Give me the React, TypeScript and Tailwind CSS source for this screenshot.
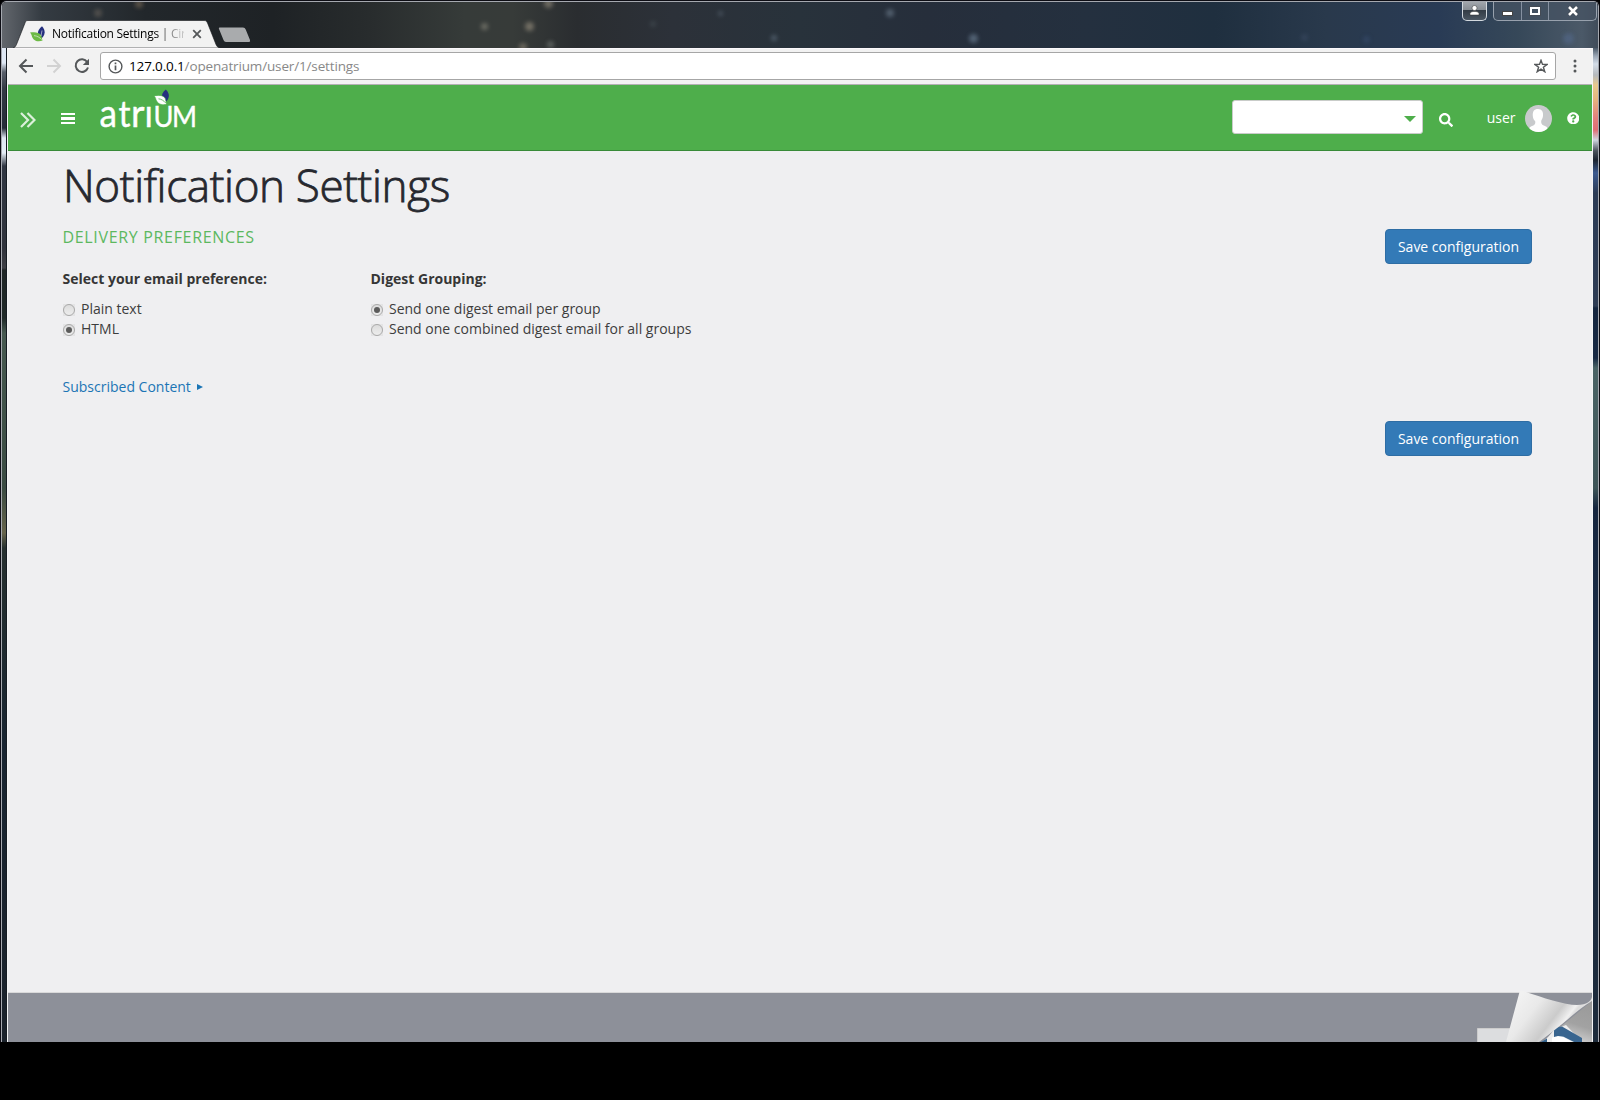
import React from "react";
import { FaSearch, FaQuestionCircle } from "react-icons/fa";

function Leaf({ className, light }: { className: string; light: string }) {
  return (
    <svg viewBox="0 0 16 16" className={className}>
      <path d="M12 0.3 C8.6 3 7.4 6 8 9 C8.5 10.8 9.6 12 11 12.8 C14.5 10 16.6 5.5 12 .3Z" fill="#25307f" />
      <path d="M0 6.6 C4 5.8 9 6 11 9 C12 11 11.8 12.8 12.6 14.6 C9 16 4.5 15.5 2.6 12 C1.6 10 1.6 8 0 6.6Z" fill={light} />
      <path d="M4 9.600 C7.500 10 10 11.600 11.600 13.600 M12 4.500 L11 10" stroke="#f2f2f2" strokeWidth=".6" fill="none" />
    </svg>
  );
}

const stars = [
  { x: 484, y: 25, s: 7, c: "#aaa695" },
  { x: 548, y: 2, s: 9, c: "#b9ae98" },
  { x: 523, y: 46, s: 8, c: "#a89e88" },
  { x: 550, y: 43, s: 7, c: "#8f958f" },
  { x: 529, y: 25, s: 9, c: "#c0b39c" },
  { x: 720, y: 12, s: 5, c: "#6d7c8a" },
  { x: 774, y: 37, s: 6, c: "#7b8ea0" },
  { x: 890, y: 12, s: 8, c: "#8496a8" },
  { x: 973, y: 37, s: 9, c: "#8ba3bb" },
  { x: 653, y: 23, s: 6, c: "#505b60" },
  { x: 98, y: 12, s: 8, c: "#81766a" },
  { x: 139, y: 3, s: 8, c: "#9a8469" },
  { x: 1304, y: 36, s: 7, c: "#42526b" },
  { x: 1366, y: 38, s: 7, c: "#3d5377" },
  { x: 1568, y: 37, s: 11, c: "#59719a" },
];

function TitleBar() {
  return (
    <div className="relative flex h-[46px] shrink-0 items-start overflow-hidden bg-[linear-gradient(90deg,#62666c_0%,#343b42_2.5%,#22272b_9%,#1e2225_17%,#282c2d_23%,#363b39_29%,#373b39_32%,#2a2d30_36%,#2c3139_42%,#28323b_50%,#262e3b_58%,#24303f_68%,#1f2f3f_76%,#29394c_83%,#293b55_90%,#364859_95%,#4b5968_99%,#404c5a_100%)]">
      {stars.map((s, i) => (
        <span
          key={i}
          className="absolute rounded-full opacity-45 blur-[2px]"
          style={{ left: s.x - 2 - s.s / 2, top: s.y - s.s / 2 - 1, width: s.s, height: s.s, background: s.c }}
        />
      ))}
      <div className="relative mt-[18px] ml-[11px] h-7 w-[207px]">
        <svg className="absolute inset-0" width="207" height="28" viewBox="0 0 207 28">
          <path d="M0 28 C2 27.500 2.500 26.500 3.500 24.500 L12 3 C12.700 1 13 .5 15 .5 H191 C193 .5 193.500 1 194.500 3 L203 24.500 C204 26.500 204.500 27.500 207 28Z" fill="#f2f2f2" stroke="#15181b" strokeWidth=".6" />
        </svg>
        <div className="relative flex h-full items-center pl-[17px]">
          <Leaf className="size-4" light="#6dba45" />
          <div className="ml-[6px] h-5 w-[132px] bg-[linear-gradient(90deg,#000_78%,#0003_97%)] bg-clip-text font-['Open_Sans'] text-[12px] leading-5 font-normal tracking-[-0.27px] whitespace-nowrap text-transparent">
            Notification Settings | Cir
          </div>
          <svg className="ml-2" width="10" height="10" viewBox="0 0 10 10">
            <path d="M1.200 1.200 L8.800 8.800 M8.800 1.200 L1.200 8.800" stroke="#55585a" strokeWidth="1.800" />
          </svg>
        </div>
      </div>
      <svg className="relative mt-[25px] -ml-[2px]" width="34" height="16" viewBox="0 0 34 16">
        <path d="M1.500 0.500 H25 Q27 .5 27.700 2.500 L32 13 Q32.700 15 31 15 H8 Q6.300 15 5.500 13 L1 2 Q.4 .5 1.500 .5Z" fill="#a9abad" />
      </svg>
      <div className="relative -mt-px mr-px ml-auto flex">
        <div className="mr-[6px] flex h-5 w-[25px] items-center justify-center rounded-b-[5px] border border-t-0 border-[#d3d9df] bg-[linear-gradient(#a4a9af_0%,#888e95_45%,#333c46_50%,#4b5763_100%)]">
          <svg width="11" height="11" viewBox="0 0 11 11">
            <circle cx="5.500" cy="3" r="2.500" fill="#fff" stroke="#333" strokeWidth=".5" />
            <path d="M1 10 V8.500 Q1.500 6.500 4 6.500 H7 Q9.500 6.500 10 8.500 V10Z" fill="#fff" stroke="#333" strokeWidth=".5" />
          </svg>
        </div>
        <div className="flex h-5 w-[104px] divide-x divide-[#8590a0] rounded-b-[5px] border border-t-0 border-[#98a1ad] bg-[#465362]/70">
          <div className="flex w-[28px] items-center justify-center">
            <span className="mt-[6px] h-[5px] w-[11px] border border-[#444] bg-white" />
          </div>
          <div className="flex w-[27px] items-center justify-center">
            <span className="h-[8px] w-[10px] border-2 border-white outline outline-[#444b55]" />
          </div>
          <div className="flex flex-1 items-center justify-center">
            <svg width="12" height="10" viewBox="0 0 12 10">
              <path d="M2 1 L10 9 M10 1 L2 9" stroke="#3c444e" strokeWidth="4" />
              <path d="M2 1 L10 9 M10 1 L2 9" stroke="#fff" strokeWidth="2.600" />
            </svg>
          </div>
        </div>
      </div>
    </div>
  );
}

function Toolbar() {
  return (
    <div className="flex h-9 shrink-0 items-center border-t border-t-[#fbf8fb] bg-[#f2f2f2] pb-px pl-[9px]">
      <svg width="17" height="16" viewBox="0 0 17 16" fill="none" stroke="#55585a" strokeWidth="2">
        <path d="M16 8 H3.500 M9.500 1.500 L3 8 L9.500 14.500" />
      </svg>
      <svg className="ml-3" width="17" height="16" viewBox="0 0 17 16" fill="none" stroke="#d2d2d2" strokeWidth="2">
        <path d="M1 8 H13.500 M7.500 1.500 L14 8 L7.500 14.500" />
      </svg>
      <svg className="ml-[11px]" width="16" height="16" viewBox="0 0 16 16" fill="none">
        <path d="M13.200 4 A6.300 6.300 0 1 0 14 9.500" stroke="#55585a" strokeWidth="2" />
        <path d="M15 .8 V7 H8.800Z" fill="#55585a" />
      </svg>
      <div className="ml-[10px] flex h-7 w-[1456px] items-center rounded-[3px] border border-[#a6a6a6] bg-white pr-[7px] pl-[7px]">
        <svg width="15" height="15" viewBox="0 0 15 15" fill="none">
          <circle cx="7.500" cy="7.500" r="6.400" stroke="#55585a" strokeWidth="1.400" />
          <path d="M7.500 6.500 V11.200 M7.500 3.600 V5.200" stroke="#55585a" strokeWidth="1.700" />
        </svg>
        <span className="ml-[6px] font-['Open_Sans'] text-[13.500px] leading-5 tracking-[-0.15px] text-[#888]">
          <span className="text-black">127.0.0.1</span>/openatrium/user/1/settings
        </span>
        <svg className="ml-auto" width="14" height="14" viewBox="0 0 14 14" fill="none" stroke="#55585a" strokeWidth="1.400">
          <path d="M7 1.300 L8.500 5.400 L13 5.500 L9.400 8.200 L10.800 12.700 L7 10.100 L3.200 12.700 L4.600 8.200 L1 5.500 L5.500 5.400Z" />
        </svg>
      </div>
      <svg className="ml-[17px]" width="4" height="14" viewBox="0 0 4 14" fill="#55585a">
        <circle cx="2" cy="2" r="1.500" />
        <circle cx="2" cy="7" r="1.500" />
        <circle cx="2" cy="12" r="1.500" />
      </svg>
    </div>
  );
}

function Logo() {
  return (
    <svg width="100" height="64" viewBox="0 -8 100 64" fill="#fff" stroke="#fff" strokeWidth=".4" fontFamily="Lato, sans-serif" fontSize="39">
      <text y="38" x="-.5" textLength="17.500" lengthAdjust="spacingAndGlyphs">a</text>
      <text y="38" x="18.500" fontSize="37" textLength="12" lengthAdjust="spacingAndGlyphs">t</text>
      <text y="38" x="31" textLength="13.500" lengthAdjust="spacingAndGlyphs">r</text>
      <text y="38" x="44.500" textLength="8.500" lengthAdjust="spacingAndGlyphs">ı</text>
      <text y="38" x="53.500" fontSize="28" textLength="20" lengthAdjust="spacingAndGlyphs">U</text>
      <text y="38" x="72" fontSize="28" textLength="25" lengthAdjust="spacingAndGlyphs">M</text>
      <g transform="translate(54 0)" stroke="none">
        <path d="M11.800 0.500 C8.600 3 7.400 6 8 9 L12 12.800 C14.500 10 17 5.500 11.800 .5Z" fill="#25307f" />
        <path d="M0 7 C4 6 9 6 11 9 C12 11 11.800 13 12.600 15 C9 16.500 4.500 15.500 2.600 12 C1.600 10 1.600 8 0 7Z" stroke="#4eae4b" strokeWidth=".6" />
        <path d="M4.500 9.800 C7.500 10 10 12 11.800 14" stroke="#4eae4b" strokeWidth=".8" fill="none" />
      </g>
    </svg>
  );
}

function SiteHeader() {
  return (
    <header className="flex h-[66px] shrink-0 items-center border-b border-[#388a38] bg-[#4eae4b] pl-3">
      <svg className="mt-1" width="16" height="16" viewBox="0 0 16 16" fill="none" stroke="#dcf0db" strokeWidth="2.200">
        <path d="M1 1 L8 8 L1 15 M7.500 1 L14.500 8 L7.500 15" />
      </svg>
      <div className="mt-[2px] ml-[25px] flex w-[14px] flex-col gap-[2px]">
        <span className="h-[2.500px] bg-white" />
        <span className="h-[2.500px] bg-white" />
        <span className="h-[2.500px] bg-white" />
      </div>
      <div className="-mt-[10px] ml-[25px] flex">
        <Logo />
      </div>
      <div className="ml-auto flex items-center pr-[13px]">
        <div className="-mt-[2px] mr-px flex h-[34px] w-[191px] items-center justify-end rounded-[3px] border border-[#c9ccc9] bg-white pr-[6px]">
          <span className="mt-1 border-x-[6px] border-t-[6px] border-x-transparent border-t-[#4eae4b]" />
        </div>
        <FaSearch className="mt-[4px] ml-[15px] size-[14px] text-white" />
        <span className="ml-[33.500px] font-['Open_Sans'] text-[14px] leading-5 text-white">user</span>
        <svg className="mt-px ml-[9px]" width="27" height="27" viewBox="0 0 27 27">
          <clipPath id="avatar">
            <circle cx="13.500" cy="13.500" r="13.500" />
          </clipPath>
          <g clipPath="url(#avatar)">
            <rect width="27" height="27" fill="#c8cacc" />
            <path d="M13 4 C17 4 18.500 7 18 11 C17.700 13.500 16.500 14.500 16.200 16 C16 20 18 20 21 21.500 C22.500 22.500 23 24 23 27 H4 C4 24 4 22.500 6 21.500 C9 20.200 10.500 20 10.300 16.500 C9 15 8 13.500 7.800 11 C7.500 6.500 9 4 13 4Z" fill="#fff" />
          </g>
        </svg>
        <FaQuestionCircle className="mt-px ml-[15px] size-[12.500px] text-white" />
      </div>
    </header>
  );
}

function RadioOption({ label, checked }: { label: string; checked?: boolean }) {
  return (
    <div className="flex h-5 items-center">
      <span className="mt-[2px] flex size-[12.500px] items-center justify-center bg-[#e4e4e5]">
        <span className="flex size-3 items-center justify-center rounded-full border border-[#a9a9a9] bg-[linear-gradient(#dcdcdc,#ededed)]">
          {checked && <span className="size-[6px] rounded-full bg-[#5b5b5b]" />}
        </span>
      </span>
      <span className="ml-[6px] text-[14px] leading-5 text-[#3d3d3d]">{label}</span>
    </div>
  );
}

function SaveButton() {
  return (
    <button className="h-[35px] w-[147px] rounded-[4px] border border-[#2e6da4] bg-[#337ab7] text-[14px] leading-5 whitespace-nowrap text-white">
      Save configuration
    </button>
  );
}

function Footer() {
  return (
    <footer className="relative h-[50px] shrink-0 border-t border-[#d9d9da] bg-[#8d9099]">
      <svg className="absolute right-0 bottom-0" width="116" height="52" viewBox="0 0 116 52">
        <defs>
          <linearGradient id="curl" gradientUnits="userSpaceOnUse" x1="46" y1="4" x2="88" y2="36">
            <stop offset="0" stopColor="#f1f1f1" />
            <stop offset=".35" stopColor="#e9e9e9" />
            <stop offset=".75" stopColor="#cbcbcb" />
            <stop offset=".95" stopColor="#f0f0f0" />
            <stop offset="1" stopColor="#dedede" />
          </linearGradient>
          <linearGradient id="under" x1="1" y1="0" x2=".6" y2="1">
            <stop offset="0" stopColor="#999" />
            <stop offset=".6" stopColor="#a2a2a2" />
            <stop offset="1" stopColor="#d4d4d4" />
          </linearGradient>
        </defs>
        <path d="M1.500 38.500 H42 V52 H1.500Z" fill="#dcdddf" />
        <path d="M1.500 52 V38.500 H38" stroke="#ccc" fill="none" />
        <path d="M116 11 L66 52 H116Z" fill="url(#under)" />
        <path d="M68 52 L78 40 L90 35 L106 52Z" fill="#eee" />
        <path d="M78 47 V38 L86 36.500 L106 48 V52 H98 L87 46.500 L80 50Z" fill="#39658f" />
        <path d="M76 52 V47.500 L82 46 L86 46.500 L96 52Z" fill="#fff" />
        <path d="M30 52 L43.500 2 Q44 0 46 .5 C65 7 88 15 101 15 C111 15 115 11 116 7 V11 C108 16 100 22 91 30 Q79 40 63 52Z" fill="url(#curl)" />
        <path d="M65 52 L71 48.500 V52Z" fill="#34628c" />
      </svg>
    </footer>
  );
}

export default function App() {
  return (
    <div className="flex h-[1100px] w-[1600px] flex-col overflow-hidden bg-black font-['Open_Sans',sans-serif]">
      <div className="flex h-[1042px] flex-col overflow-hidden rounded-t-[6px] border-x border-t border-[#0d0d14]">
        <div className="flex h-full flex-col overflow-hidden rounded-t-[5px] border-x border-t border-[#a5a8af]">
          <TitleBar />
          <div className="flex min-h-0 flex-1">
            <div className="w-[5px] shrink-0 border-r border-[#151b22] bg-[linear-gradient(180deg,#dfe8f5_0px,#dfe8f5_15px,#59606b_24px,#343a45_40px,#252c38_80px,#dfe7f2_90px,#e5edf6_105px,#303642_118px,#30333c_200px,#3e3f45_220px,#1f2626_222px,#1f2928_270px,#465950_285px,#3a4b42_440px,#66644b_485px,#26302f_500px,#182430_700px,#1b222b_994px)]" />
            <div className="flex w-[1586px] min-w-0 flex-col border-x border-[#f5f5f6] bg-[#f2f2f2]">
              <Toolbar />
              <div className="h-px shrink-0 bg-[#b3b0b3]" />
              <SiteHeader />
              <main className="flex-1 bg-[#efeff1] px-[54.500px]">
                <h1 className="pt-[2px] pl-[0.500px] text-[44px] leading-[64px] font-light tracking-[-0.36px] whitespace-nowrap text-[#26282f] [-webkit-text-stroke:0.8px_#26282f]">
                  Notification Settings
                </h1>
                <div className="flex justify-between">
                  <div className="pt-2">
                    <h2 className="text-[16px] leading-6 tracking-[0.67px] text-[#5cb860]">DELIVERY PREFERENCES</h2>
                    <div className="mt-5 flex">
                      <section className="w-[308px]">
                        <h3 className="mb-[10px] text-[14px] leading-5 font-bold text-[#363636]">Select your email preference:</h3>
                        <RadioOption label="Plain text" />
                        <RadioOption label="HTML" checked />
                      </section>
                      <section>
                        <h3 className="mb-[10px] text-[14px] leading-5 font-bold text-[#363636]">Digest Grouping:</h3>
                        <RadioOption label="Send one digest email per group" checked />
                        <RadioOption label="Send one combined digest email for all groups" />
                      </section>
                    </div>
                  </div>
                  <div className="mt-3 mr-[5.500px]">
                    <SaveButton />
                  </div>
                </div>
                <div className="mt-[38px] flex h-5 items-center text-[14px] leading-5 text-[#1b75b5]">
                  Subscribed Content
                  <span className="ml-[6.500px] border-y-[3px] border-l-[6px] border-y-transparent border-l-[#1b75b5]" />
                </div>
                <div className="mt-[24px] mr-[5.500px] flex justify-end">
                  <SaveButton />
                </div>
              </main>
              <Footer />
            </div>
            <div className="w-[5px] shrink-0 bg-[linear-gradient(180deg,#4b5968_0px,#9aa6b5_8px,#d3dce7_16px,#b5b9bd_27px,#e8c88d_37px,#e6b77f_50px,#e3807d_70px,#df6f75_82px,#cfd6df_92px,#4a515b_103px,#1c2430_112px,#3c5a90_125px,#2b3b55_145px,#2e3c54_258px,#15263f_260px,#182a44_310px,#4b6466_320px,#3e5558_440px,#16263f_460px,#1a2c45_600px,#1d2b3b_994px)]" />
          </div>
        </div>
      </div>
    </div>
  );
}
